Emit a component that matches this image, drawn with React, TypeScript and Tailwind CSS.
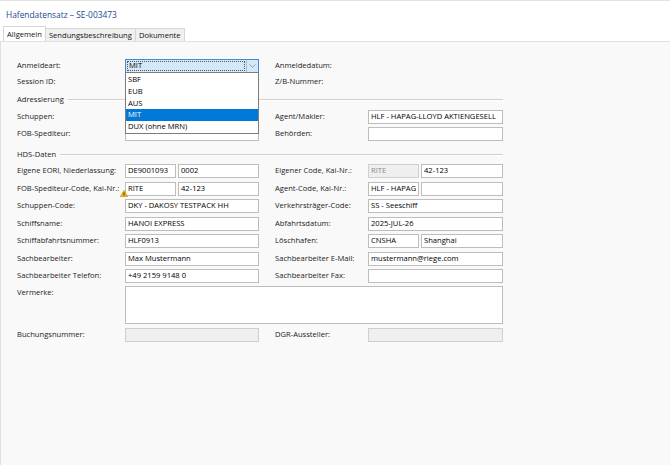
import React from 'react';

const font = { fontFamily: '"Open Sans", "Noto Sans", sans-serif' };

function Input({ value = '', w = 'w-full', disabled = false, className = '' }: { value?: string; w?: string; disabled?: boolean; className?: string }) {
	return (
		<div
			className={`${w} h-[14px] border flex items-center px-[2px] overflow-hidden whitespace-nowrap ${disabled ? 'bg-[#efefef] border-[#cfcfcf] text-[#8a8a8a]' : 'bg-white border-[#bdbdbd] text-black'} ${className}`}
		>
			{value}
		</div>
	);
}

function Label({ children }: { children?: React.ReactNode }) {
	return <div className="flex items-center whitespace-nowrap text-[#1b1b1b]">{children}</div>;
}

function Row({ left, leftInput, right, rightInput, className = '' }: { left?: string; leftInput?: React.ReactNode; right?: string; rightInput?: React.ReactNode; className?: string }) {
	return (
		<div className={`grid grid-cols-[108px_134px_16px_93px_135px] h-[14px] ${className}`}>
			<Label>{left}</Label>
			<div className="flex gap-[2px]">{leftInput}</div>
			<div />
			<Label>{right}</Label>
			<div className="flex gap-[2px]">{rightInput}</div>
		</div>
	);
}

function Heading({ title, className = '' }: { title: string; className?: string }) {
	return (
		<div className={`flex items-center h-[10px] w-[486px] ${className}`}>
			<span className="text-[#1b1b1b] pr-[4px]">{title}</span>
			<div className="flex-1 border-t border-[#cfcfcf] border-b border-b-white h-[2px]" />
		</div>
	);
}

function Warn() {
	return (
		<svg width="8" height="7" viewBox="0 0 8 7" className="absolute left-[-5px] top-[8px]">
			<path d="M4 0.3 L7.8 6.8 L0.2 6.8 Z" fill="#f2b21b" stroke="#c98a00" strokeWidth="0.5" />
			<rect x="3.6" y="2.3" width="0.8" height="2.6" fill="#3a2a00" />
			<rect x="3.6" y="5.4" width="0.8" height="0.8" fill="#3a2a00" />
		</svg>
	);
}

export default function App() {
	const options = ['SBF', 'EUB', 'AUS', 'MIT', 'DUX (ohne MRN)'];
	return (
		<div style={font} className="w-[670px] h-[465px] bg-[#f9f9f9] text-[7.6px] leading-none overflow-hidden flex flex-col">
			<div className="bg-white border-t border-[#e3e3e3] h-[41px] flex flex-col shrink-0">
				<div className="h-[26px] flex items-center pl-[6px] pt-[2px] text-[8.4px] text-[#24488f]">Hafendatensatz – SE-003473</div>
				<div className="flex items-end h-[14px] pl-[3px]">
					<div className="h-[15px] px-[3px] pt-[2px] bg-white border border-b-0 border-[#d6d6d6] flex items-center text-[#111]">Allgemein</div>
					<div className="h-[13px] px-[3px] pt-[2px] bg-[#f0f0f0] border border-l-0 border-b-0 border-[#d6d6d6] flex items-center text-[#111]">Sendungsbeschreibung</div>
					<div className="h-[13px] px-[3px] pt-[2px] bg-[#f0f0f0] border border-l-0 border-b-0 border-[#d6d6d6] flex items-center text-[#111]">Dokumente</div>
				</div>
			</div>
			<div className="flex-1 border-t border-l border-[#e1e1e1] pl-[16px] flex flex-col">
				<div className="relative mt-[17px]">
					<Row
						left="Anmeldeart:"
						leftInput={
							<div className="w-full h-[14px] border border-[#3d8ad8] bg-[#d5e8f8] flex">
								<div className="flex-1 m-[1px] border border-dotted border-[#555] flex items-center px-[1px] text-black">MIT</div>
								<div className="w-[12px] flex items-center justify-center border-l border-[#9cc3ea]">
									<svg width="7" height="4" viewBox="0 0 7 4"><path d="M0.5 0.5 L3.5 3.3 L6.5 0.5" fill="none" stroke="#8a8a8a" strokeWidth="0.8" /></svg>
								</div>
							</div>
						}
						right="Anmeldedatum:"
					/>
					<Row className="mt-[2px]" left="Session ID:" right="Z/B-Nummer:" />
					<Heading title="Adressierung" className="mt-[6px]" />
					<Row className="mt-[5px]" left="Schuppen:" leftInput={<Input />} right="Agent/Makler:" rightInput={<Input value="HLF - HAPAG-LLOYD AKTIENGESELL" />} />
					<Row className="mt-[3px]" left="FOB-Spediteur:" leftInput={<Input />} right="Behörden:" rightInput={<Input />} />
					<div className="absolute left-[108px] top-[13px] w-[134px] h-[62px] bg-white border border-[#7c7c7c] flex flex-col pt-[1px]">
						{options.map((o) => (
							<div key={o} className={`h-[12.2px] flex items-center px-[2px] ${o === 'MIT' ? 'bg-[#0078d7] text-white' : 'text-black'}`}>
								{o}
							</div>
						))}
					</div>
				</div>
				<Heading title="HDS-Daten" className="mt-[9px]" />
				<div className="flex flex-col gap-[3.5px] mt-[4px]">
					<Row
						left="Eigene EORI, Niederlassung:"
						leftInput={<><Input w="w-[51px]" value="DE9001093" /><Input w="flex-1" value="0002" /></>}
						right="Eigener Code, Kai-Nr.:"
						rightInput={<><Input w="w-[51px]" value="RITE" disabled /><Input w="flex-1" value="42-123" /></>}
					/>
					<Row
						left="FOB-Spediteur-Code, Kai-Nr.:"
						leftInput={<div className="relative flex gap-[2px] w-full"><Warn /><Input w="w-[51px]" value="RITE" /><Input w="flex-1" value="42-123" /></div>}
						right="Agent-Code, Kai-Nr.:"
						rightInput={<><Input w="w-[51px]" value="HLF - HAPAG" /><Input w="flex-1" /></>}
					/>
					<Row left="Schuppen-Code:" leftInput={<Input value="DKY - DAKOSY TESTPACK HH" />} right="Verkehrsträger-Code:" rightInput={<Input value="SS - Seeschiff" />} />
					<Row left="Schiffsname:" leftInput={<Input value="HANOI EXPRESS" />} right="Abfahrtsdatum:" rightInput={<Input value="2025-JUL-26" />} />
					<Row
						left="Schiffabfahrtsnummer:"
						leftInput={<Input value="HLF0913" />}
						right="Löschhafen:"
						rightInput={<><Input w="w-[51px]" value="CNSHA" /><Input w="flex-1" value="Shanghai" /></>}
					/>
					<Row left="Sachbearbeiter:" leftInput={<Input value="Max Mustermann" />} right="Sachbearbeiter E-Mail:" rightInput={<Input value="mustermann@riege.com" />} />
					<Row left="Sachbearbeiter Telefon:" leftInput={<Input value="+49 2159 9148 0" />} right="Sachbearbeiter Fax:" rightInput={<Input />} />
				</div>
				<div className="flex mt-[3px]">
					<div className="w-[108px] pt-[3px] text-[#1b1b1b]">Vermerke:</div>
					<div className="w-[378px] h-[38px] bg-white border border-[#bdbdbd]" />
				</div>
				<Row className="mt-[4px]" left="Buchungsnummer:" leftInput={<Input disabled />} right="DGR-Aussteller:" rightInput={<Input disabled />} />
			</div>
		</div>
	);
}
